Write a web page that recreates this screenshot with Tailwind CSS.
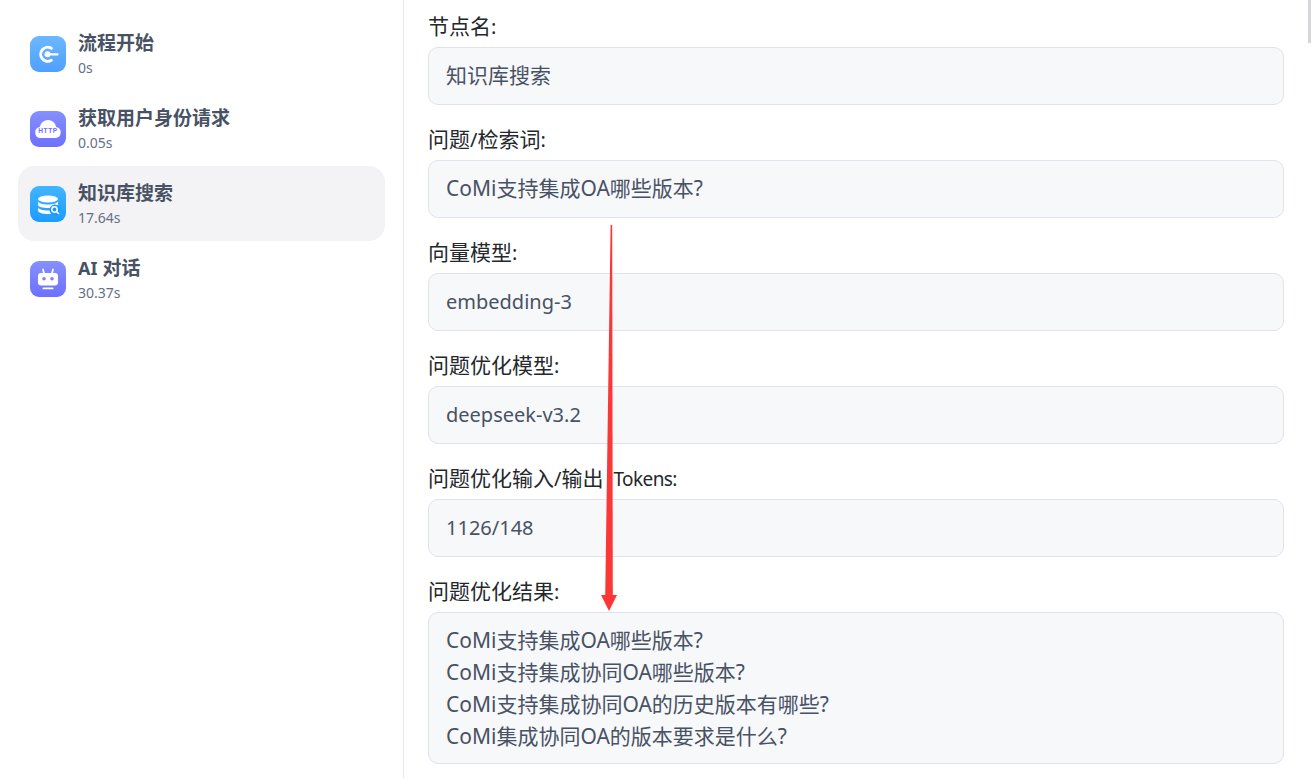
<!DOCTYPE html>
<html lang="zh-CN">
<head>
  <meta charset="UTF-8" />
  <title>知识库搜索</title>
  <script src="https://cdn.jsdelivr.net/npm/@tailwindcss/browser@4"></script>
</head>
<body class="bg-white font-['Noto_Sans','Noto_Sans_CJK_SC',sans-serif]">
  <div class="relative flex h-[778px] overflow-hidden">
    <!-- left: node list -->
    <aside class="w-[404px] shrink-0 border-r border-[#e8e8ec] pt-4 pl-[18px] pr-[18px]">
      <div class="flex h-[75px] items-center gap-3 rounded-2xl px-3">
        <div class="flex h-9 w-9 items-center justify-center rounded-[9px] bg-gradient-to-b from-[#6cb8ff] to-[#4f9fff]">
          <svg width="22" height="22" viewBox="0 0 22 22" fill="none" stroke="white" stroke-linecap="round">
            <path d="M14.300 5.300A7 7 0 1 0 14.300 17.300" stroke-width="3"/>
            <circle cx="10.500" cy="11.300" r="3" fill="white" stroke="none"/>
            <path d="M11 11.300H20.500" stroke-width="2.200"/>
          </svg>
        </div>
        <div class="pt-[2px]">
          <div class="text-[19px] leading-6 font-bold text-[#485264]">流程开始</div>
          <div class="mt-[3px] text-sm leading-5 text-[#667085]">0s</div>
        </div>
      </div>
      <div class="flex h-[75px] items-center gap-3 rounded-2xl px-3">
        <div class="flex h-9 w-9 items-center justify-center rounded-[9px] bg-gradient-to-b from-[#8590ff] to-[#6d70ff]">
          <svg width="28" height="24" viewBox="0 0 28 24">
            <path d="M6.500 21a5.500 5.500 0 0 1-.8-10.900A8.500 8.500 0 0 1 14 3a8.200 8.200 0 0 1 8.200 7.100A5.500 5.500 0 0 1 21.500 21Z" fill="white"/>
            <text x="14" y="15.500" text-anchor="middle" font-size="6.500" font-weight="700" letter-spacing=".6" fill="#6d70ff" font-family="Liberation Sans">HTTP</text>
          </svg>
        </div>
        <div class="pt-[2px]">
          <div class="text-[19px] leading-6 font-bold text-[#485264]">获取用户身份请求</div>
          <div class="mt-[3px] text-sm leading-5 text-[#667085]">0.05s</div>
        </div>
      </div>
      <div class="flex h-[75px] items-center gap-3 rounded-2xl bg-[#f3f3f6] px-3">
        <div class="flex h-9 w-9 items-center justify-center rounded-[9px] bg-gradient-to-b from-[#42b5ff] to-[#1c9bff]">
          <svg width="26" height="26" viewBox="0 0 26 26" fill="white">
            <ellipse cx="13" cy="8" rx="10" ry="3.500"/>
            <path d="M3 10.500c1 2 5 3 10 3s9-1 10-3v3.500c-1 2-5 3-10 3s-10-1-10-3Z"/>
            <path d="M3 16.500c1 2 5 3 10 3 1 0 2 0 2.500-.1l.5 3.600h-3c-5.500 0-10-1.500-10-3.500Z"/>
            <circle cx="20" cy="19" r="5.500" fill="#1c9bff"/>
            <circle cx="19.500" cy="18.500" r="2.700" fill="none" stroke="white" stroke-width="1.500"/>
            <path d="M21.500 20.500l2 2" stroke="white" stroke-width="1.500" stroke-linecap="round"/>
          </svg>
        </div>
        <div class="pt-[2px]">
          <div class="text-[19px] leading-6 font-bold text-[#485264]">知识库搜索</div>
          <div class="mt-[3px] text-sm leading-5 text-[#667085]">17.64s</div>
        </div>
      </div>
      <div class="flex h-[75px] items-center gap-3 rounded-2xl px-3">
        <div class="flex h-9 w-9 items-center justify-center rounded-[9px] bg-gradient-to-b from-[#8590ff] to-[#6d70ff]">
          <svg width="24" height="24" viewBox="0 0 24 24" fill="white">
            <path d="M8 6.500 7 2.500M16 6.500l1-4" stroke="white" stroke-width="1.800" stroke-linecap="round"/>
            <path fill-rule="evenodd" d="M5 6h14A3 3 0 0 1 22 9v6.500a3 3 0 0 1-3 3H5a3 3 0 0 1-3-3V9a3 3 0 0 1 3-3ZM8 10a1.300 1.300 0 0 0 0 3.600a1.300 1.300 0 0 0 0-3.600ZM16 10a1.300 1.300 0 0 0 0 3.600a1.300 1.300 0 0 0 0-3.600Z"/>
            <rect x="6.500" y="20.500" width="11" height="1.800" rx=".9"/>
          </svg>
        </div>
        <div class="pt-[2px]">
          <div class="text-[19px] leading-6 font-bold text-[#485264]"><span class="text-[18px]">AI</span> 对话</div>
          <div class="mt-[3px] text-sm leading-5 text-[#667085]">30.37s</div>
        </div>
      </div>
    </aside>

    <!-- right: node detail -->
    <main class="flex-1 pt-[11px] pr-[27px] pl-6 text-[21px]">
      <div class="mb-[19px]">
        <div class="mb-1 h-8 leading-[30px] text-[#24282c]">节点名<span class="text-xl">:</span></div>
        <div class="h-[58px] rounded-[10px] border border-[#e0e3ec] bg-[#f7f8fa] px-[17px] pt-[11px] leading-8 text-[#485264]">知识库搜索</div>
      </div>
      <div class="mb-[19px]">
        <div class="mb-1 h-8 leading-[30px] text-[#24282c]">问题<span class="text-xl">/</span>检索词<span class="text-xl">:</span></div>
        <div class="h-[58px] rounded-[10px] border border-[#e0e3ec] bg-[#f7f8fa] px-[17px] pt-[11px] leading-8 text-[#485264]">CoMi支持集成OA哪些版本?</div>
      </div>
      <div class="mb-[19px]">
        <div class="mb-1 h-8 leading-[30px] text-[#24282c]">向量模型<span class="text-xl">:</span></div>
        <div class="h-[58px] rounded-[10px] border border-[#e0e3ec] bg-[#f7f8fa] px-[17px] pt-[11px] leading-8 text-[#485264]"><span class="text-xl">embedding-3</span></div>
      </div>
      <div class="mb-[19px]">
        <div class="mb-1 h-8 leading-[30px] text-[#24282c]">问题优化模型<span class="text-xl">:</span></div>
        <div class="h-[58px] rounded-[10px] border border-[#e0e3ec] bg-[#f7f8fa] px-[17px] pt-[11px] leading-8 text-[#485264]"><span class="text-xl">deepseek-v3.2</span></div>
      </div>
      <div class="mb-[19px]">
        <div class="mb-1 h-8 leading-[30px] text-[#24282c]">问题优化输入<span class="text-xl">/</span>输出<span class="ml-[10px] text-[19px] tracking-[-0.6px]">Tokens:</span></div>
        <div class="h-[58px] rounded-[10px] border border-[#e0e3ec] bg-[#f7f8fa] px-[17px] pt-[11px] leading-8 text-[#485264]"><span class="text-xl">1126/148</span></div>
      </div>
      <div>
        <div class="mb-1 h-8 leading-[30px] text-[#24282c]">问题优化结果<span class="text-xl">:</span></div>
        <div class="h-[152px] rounded-[10px] border border-[#e0e3ec] bg-[#f7f8fa] px-[17px] pt-[11px] leading-8 text-[#485264]">
          <div>CoMi支持集成OA哪些版本?</div>
          <div>CoMi支持集成协同OA哪些版本?</div>
          <div>CoMi支持集成协同OA的历史版本有哪些?</div>
          <div>CoMi集成协同OA的版本要求是什么?</div>
        </div>
      </div>
    </main>

    <!-- scrollbar thumb -->
    <div class="absolute top-0 right-0 h-[43px] w-[3px] bg-[#d4d6d8]"></div>

    <!-- red annotation arrow -->
    <svg class="absolute top-0 left-0" width="1311" height="778" fill="none">
      <path d="M610.600 225 L612.200 225 L612.800 596 L605.200 596Z" fill="#fb3838"/>
      <path d="M601 595 L617 595 L609 611Z" fill="#fd3535"/>
    </svg>
  </div>
</body>
</html>
